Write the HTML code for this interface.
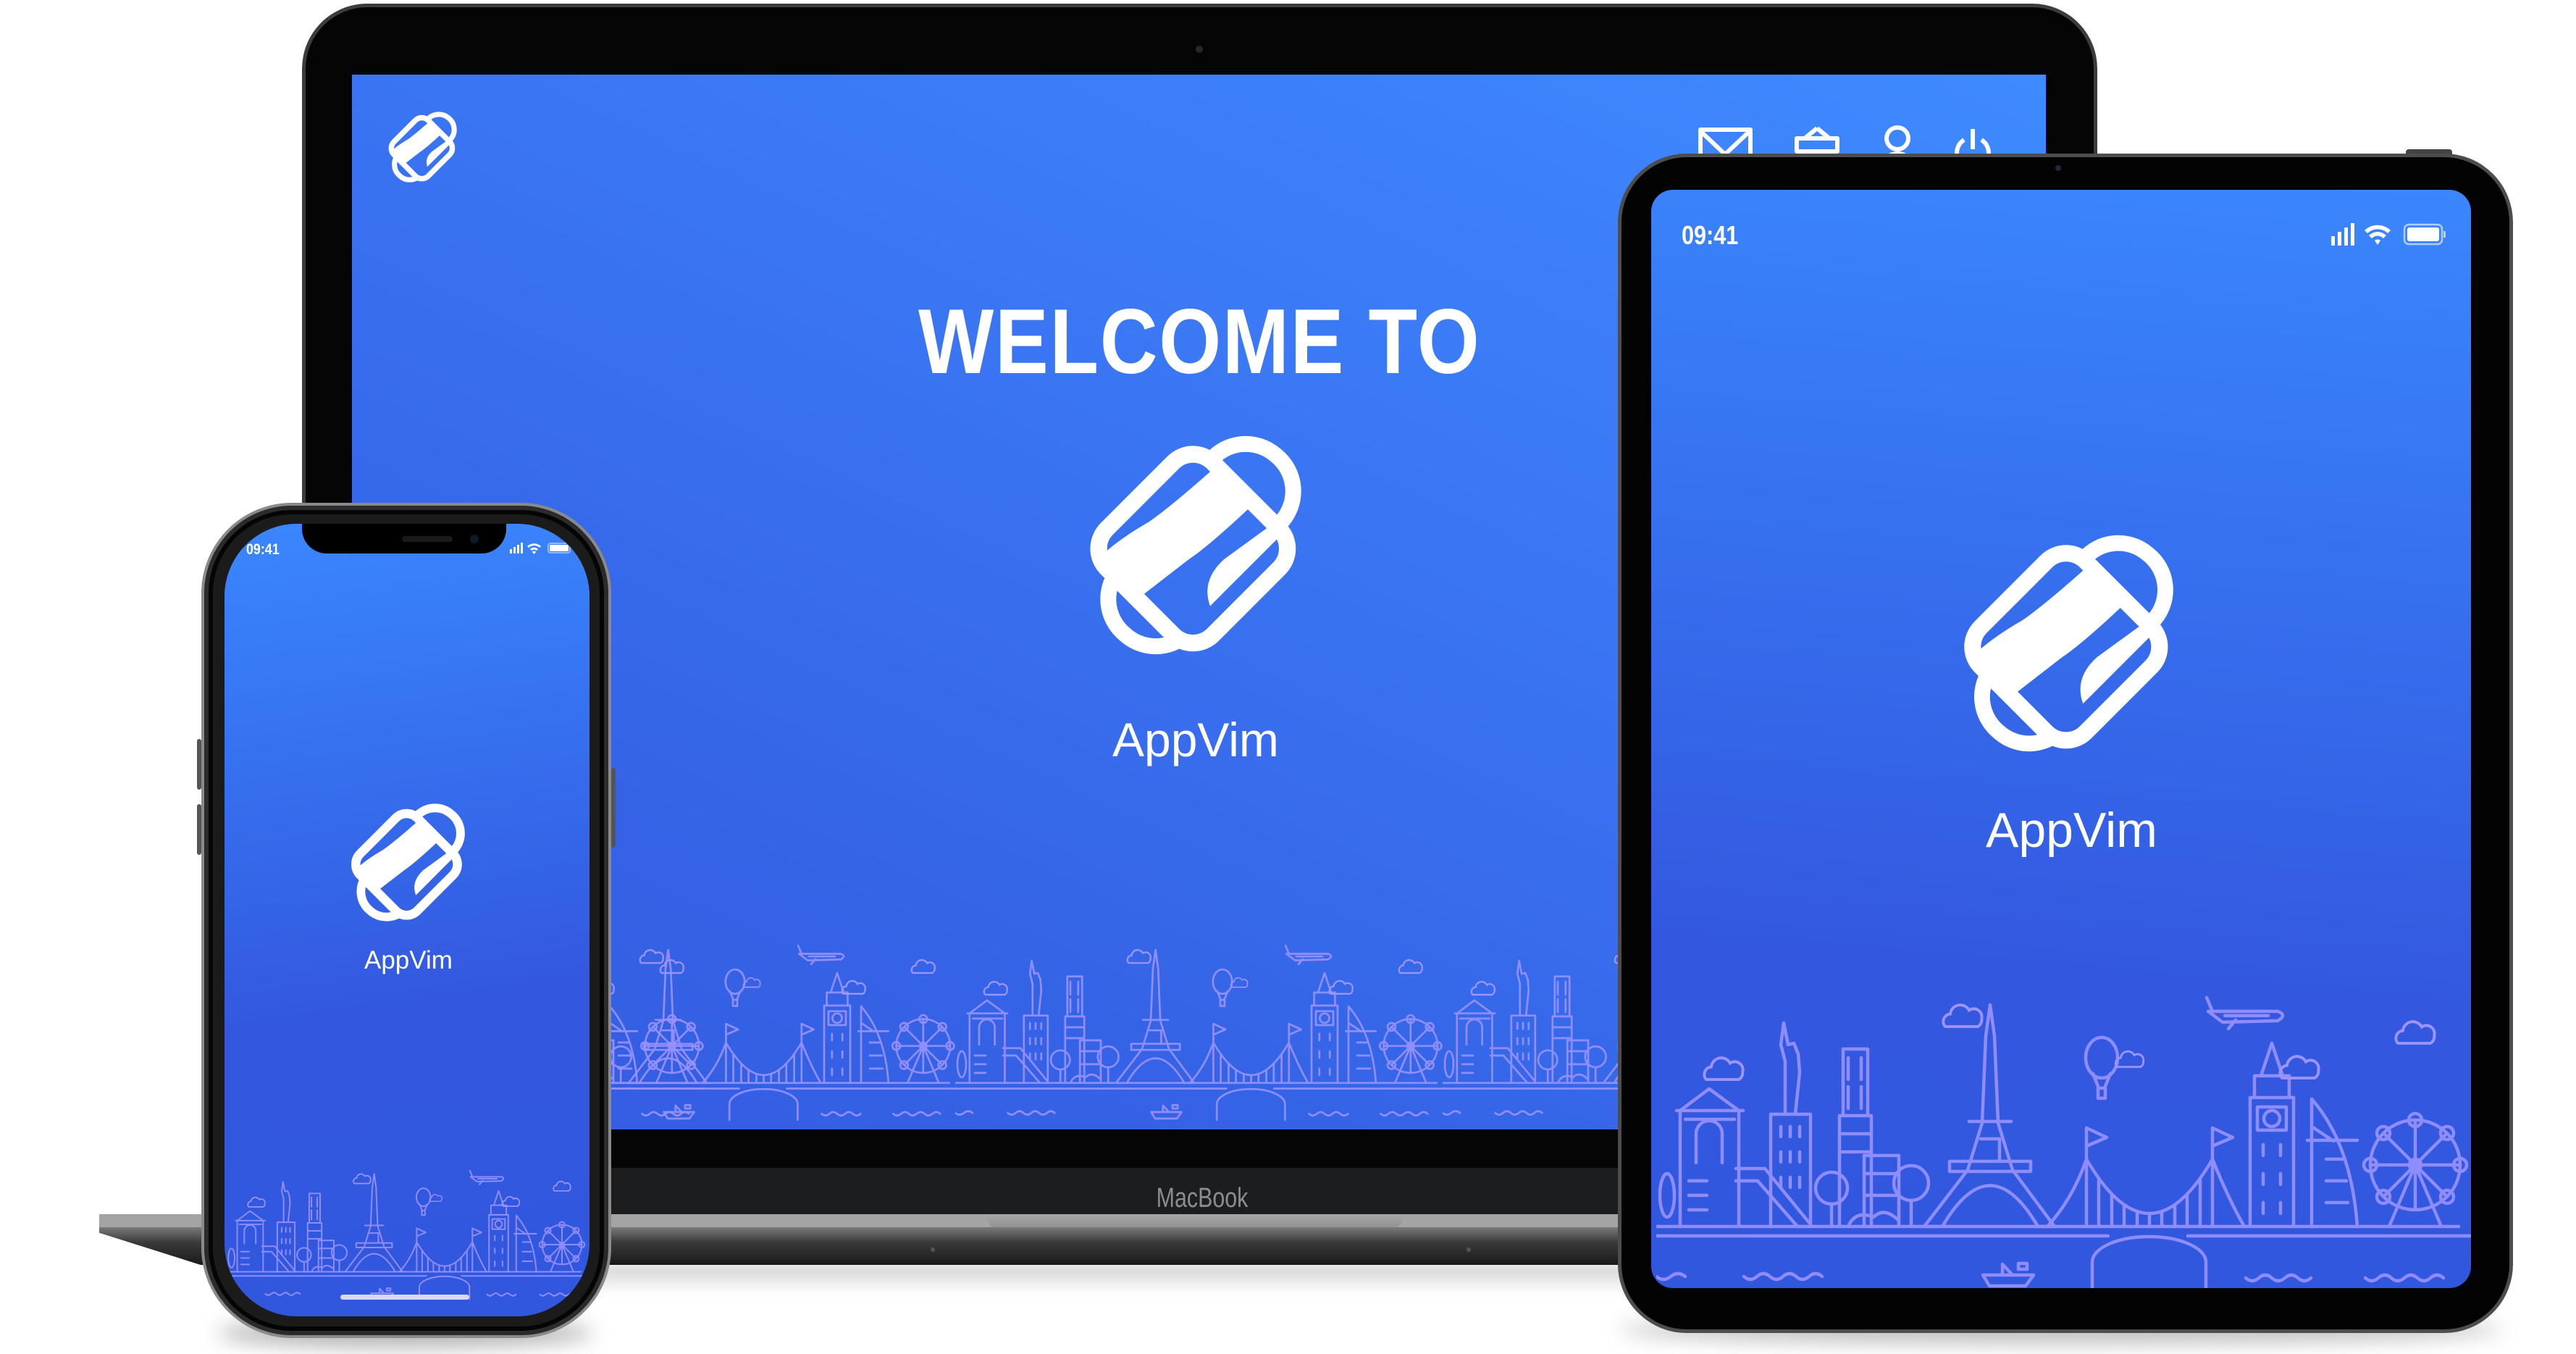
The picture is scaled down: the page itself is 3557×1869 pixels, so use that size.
<!DOCTYPE html>
<html><head><meta charset="utf-8">
<style>
*{margin:0;padding:0;box-sizing:border-box}
html,body{width:3557px;height:1869px;background:#fff;overflow:hidden;position:relative;font-family:"Liberation Sans",sans-serif}
.abs{position:absolute}
.txt{color:#fff;white-space:nowrap}
</style></head><body>
<svg width="0" height="0" style="position:absolute">
<defs>
<mask id="lm" maskUnits="userSpaceOnUse" x="-200" y="-200" width="1400" height="1400">
<rect x="-200" y="-200" width="1400" height="1400" fill="#fff"/>
<rect x="167" y="195" width="640" height="640" rx="120" transform="rotate(45 487 515)" fill="#000"/>
</mask>
<symbol id="logo" viewBox="-15 5 1005 990">
<g mask="url(#lm)"><rect x="320" y="0" width="400" height="1000" rx="195" transform="rotate(40 520 500)" fill="none" stroke="#fff" stroke-width="68"/></g>
<rect x="167" y="195" width="640" height="640" rx="120" transform="rotate(45 487 515)" fill="none" stroke="#fff" stroke-width="72"/>
<path d="M80 560 Q160 640 250 730 L470 560 Q560 500 750 320 Q670 240 590 160 Q400 330 300 400 Q160 480 80 560Z" fill="#fff"/>
<path d="M560 760 Q520 650 620 560 L840 400 L880 440 L620 700 Z" fill="#fff"/>
</symbol>
<symbol id="cloud" viewBox="-40 -40 80 60">
<path d="M-30 12 A12 12 0 0 1 -22 -8 A16 16 0 0 1 8 -14 A13 13 0 0 1 28 0 A12 12 0 0 1 22 12 Z" fill="none" stroke="#9c94ff" stroke-width="4.5"/>
</symbol>
<symbol id="sky" viewBox="0 0 1125 430">
<g fill="none" stroke="#9a92ff" stroke-width="4.5" stroke-linejoin="round" stroke-linecap="round" opacity="0.9">
<path d="M0 343H1108M0 356H624M734 356H1125"/>
<path d="M602 432V392A78.5 35 0 0 1 759 392V432"/>
<path d="M0 412q10 8 20 0t20 0M121 412q9 8 18 0t18 0t18 0t18 0t18 0t18 0M814 414q9 8 18 0t18 0t18 0t18 0t18 0M979 414q9 8 18 0t18 0t18 0t18 0t18 0t18 0"/>
<path d="M451 410H521L510 425H460ZM478 410V395L492 410M500 402h12v-8h-12z"/>
<path d="M370 343L430 265L450 200L455 80L461 37L467 80L472 200L492 265L550 343M405 253H517V267H405ZM432 198H490M395 343Q461 230 527 343M448 222h26v31M366 343h30M526 343h28"/>
<path d="M594 343V247M768 343V247M594 247V207L622 220L594 232M768 247V207L796 220L768 232M594 250Q681 400 768 250M594 250Q575 305 540 343M768 250Q790 305 812 343M611 277V343M629 298V343M646 313V343M664 322V343M681 325V343M698 322V343M716 313V343M733 298V343M751 277V343"/>
<path d="M820 343V165H880V343M826 165V135H874V165M835 135L850 90L865 135M830 178h40v32h-40zM838 230v15M862 230v15M838 270v15M862 270v15M838 310v15M862 310v15"/>
<circle cx="850" cy="194" r="11"/>
<path d="M905 343V167Q960 230 968 343M905 205L935 225M899 224H968M925 250h25M925 280h28M925 310h30"/>
<circle cx="1048" cy="258" r="62"/><circle cx="1048" cy="258" r="8"/>
<path d="M986 258H1110M1048 196V320M1004 214L1092 302M1092 214L1004 302M1048 258L1012 343M1048 258L1084 343"/>
<g><circle cx="1048" cy="196" r="9"/><circle cx="1110" cy="258" r="9"/><circle cx="986" cy="258" r="9"/><circle cx="1092" cy="214" r="9"/><circle cx="1004" cy="214" r="9"/><circle cx="1092" cy="302" r="9"/><circle cx="1004" cy="302" r="9"/></g>
<ellipse cx="615" cy="110" rx="22" ry="28"/><path d="M603 132L611 152M627 132L619 152M610 152h10v14h-10z"/>
<path d="M762 46H858Q872 51 858 59L782 61ZM768 46L760 27M800 58L790 70M785 52h60"/>
<path d="M178 188V115L172 92L176 62L182 92L190 90L196 105L198 130L192 188M158 343V188H213V343M172 205v14M185 205v14M198 205v14M172 240v14M185 240v14M198 240v14M172 275v14M185 275v14M198 275v14"/>
<path d="M258 190V98H292V190M253 343V190H297V343M265 110v30M283 110v30M265 150v30M283 150v30M253 215H297M253 240H297M287 343V245H335V343M287 270H335M287 300H335"/>
<path d="M33 343V183L73 153L114 183V343M28 183H120M40 195H108M55 255V215A18 18 0 0 1 91 215V255M45 280H70M45 300H70M45 320H70M110 263H150L213 340M110 280H140L195 343"/>
<circle cx="242" cy="290" r="22"/><path d="M242 312V343M352 307V343M265 343Q275 320 300 330Q315 315 335 335"/><circle cx="352" cy="283" r="24"/>
<ellipse cx="15" cy="300" rx="10" ry="30"/>
</g>
<use href="#cloud" x="60" y="95" width="70" height="52"/>
<use href="#cloud" x="1015" y="45" width="70" height="52"/>
<use href="#cloud" x="855" y="93" width="70" height="52"/>
<use href="#cloud" x="390" y="22" width="70" height="52"/>
<use href="#cloud" x="630" y="90" width="50" height="38"/>
</symbol>
</defs>
</svg>

<!-- LAPTOP -->
<div class="abs" style="left:417px;top:5px;width:2479px;height:1612px;background:#050505;border:5px solid #3c3c3c;border-bottom:none;border-radius:90px 90px 0 0"></div>
<div class="abs" style="left:1651px;top:63px;width:10px;height:10px;border-radius:50%;background:#1e2a36"></div>
<div class="abs" style="left:486px;top:103px;width:2339px;height:1456px;background:linear-gradient(205deg,#3f8aff 0%,#3a76f3 40%,#3563e6 75%,#345ce2 100%);overflow:hidden">
  <svg class="abs" style="left:44px;top:45px" width="105" height="110"><use href="#logo" width="105" height="110"/></svg>
  <div class="abs txt" style="left:782px;top:305px;font-size:127px;font-weight:bold;line-height:1;transform:scaleX(0.87);transform-origin:0 0;letter-spacing:2px">WELCOME TO</div>
  <svg class="abs" style="left:999px;top:487px" width="325" height="325"><use href="#logo" width="325" height="325"/></svg>
  <div class="abs txt" style="left:1050px;top:885px;font-size:66px;line-height:1">AppVim</div>
  <svg class="abs" style="left:0;top:0" width="2339" height="1456" fill="none" stroke="#fff" stroke-width="6" stroke-linejoin="round">
    <path d="M1862 76h69v50h-69zM1862 78l34 32l34-32"/>
    <path d="M1995 88h56v18h-56zM2023 74l-17 14M2023 74l17 14M2001 106l6 30h33l6-30"/>
    <circle cx="2134" cy="88" r="15"/><path d="M2112 120q22-22 44 0"/>
    <path d="M2238 75v28M2226 90a22 22 0 1 0 24 0"/>
  </svg>
  <svg class="abs" style="left:0;top:1186px" width="2339" height="270" viewBox="0 0 2339 270">
    <use href="#sky" x="-187" y="0" width="675" height="258"/>
    <use href="#sky" x="160" y="0" width="675" height="258"/>
    <use href="#sky" x="833" y="0" width="675" height="258"/>
    <use href="#sky" x="1506" y="0" width="675" height="258"/>
  </svg>
</div>
<div class="abs" style="left:422px;top:1612px;width:2469px;height:64px;background:#1c1d1f"></div>
<div class="abs" style="left:1660px;top:1635px;font-size:38px;color:#8d8d8f;line-height:1;transform:translateX(-50%) scaleX(0.8)">MacBook</div>
<!-- base -->
<div class="abs" style="left:137px;top:1676px;width:3100px;height:18px;background:#a4a4a4"></div>
<div class="abs" style="left:1362px;top:1676px;width:576px;height:24px;background:linear-gradient(#a8a8a8,#8a8a8a);border-radius:0 0 30px 30px"></div>
<div class="abs" style="left:137px;top:1694px;width:3100px;height:52px;background:linear-gradient(#7a7a7a,#3a3a3a 40%,#1a1a1a);clip-path:polygon(0 0,100% 0,100% 100%,140px 100%,0 15%)"></div>
<div class="abs" style="left:1285px;top:1722px;width:6px;height:6px;border-radius:50%;background:#555"></div>
<div class="abs" style="left:2025px;top:1722px;width:6px;height:6px;border-radius:50%;background:#555"></div>
<div class="abs" style="left:300px;top:1746px;width:2900px;height:40px;background:linear-gradient(rgba(0,0,0,0.18),rgba(0,0,0,0));filter:blur(6px)"></div>

<!-- TABLET -->
<div class="abs" style="left:2236px;top:1815px;width:1220px;height:40px;border-radius:50%;background:rgba(0,0,0,0.25);filter:blur(14px)"></div>
<div class="abs" style="left:3322px;top:206px;width:64px;height:8px;background:#444;border-radius:4px 4px 0 0"></div>
<div class="abs" style="left:2234px;top:212px;width:1236px;height:1628px;background:#030303;border:5px solid #4d4d4d;border-radius:95px"></div>
<div class="abs" style="left:2838px;top:228px;width:8px;height:8px;border-radius:50%;background:#1e2a36"></div>
<div class="abs" style="left:2280px;top:262px;width:1132px;height:1516px;border-radius:30px;background:linear-gradient(185deg,#3a86fd 0%,#3670ef 35%,#3358df 70%,#3257df 100%);overflow:hidden">
  <div class="abs txt" style="left:42px;top:45px;font-size:36px;font-weight:bold;line-height:1;transform:scaleX(0.85);transform-origin:0 0">09:41</div>
  <svg class="abs" style="left:930px;top:44px" width="170" height="36" fill="#fff">
    <rect x="9" y="20" width="5" height="13"/><rect x="18" y="14" width="5" height="19"/><rect x="27" y="8" width="5" height="25"/><rect x="36" y="2" width="5" height="31"/>
    <path d="M55 12a26 26 0 0 1 36 0l-4 4a20 20 0 0 0-28 0zM61 19a17 17 0 0 1 24 0l-4 4a11 11 0 0 0-16 0zM69 26a6 6 0 0 1 8 0l-4 6z"/>
    <rect x="110" y="4" width="52" height="27" rx="6" fill="none" stroke="#fff" stroke-opacity="0.6" stroke-width="2.5"/><rect x="114" y="8" width="44" height="19" rx="3"/><rect x="164" y="13" width="3" height="9" fill-opacity="0.6"/>
  </svg>
  <svg class="abs" style="left:412px;top:456px" width="322" height="340"><use href="#logo" width="322" height="340"/></svg>
  <div class="abs txt" style="left:462px;top:850px;font-size:68px;line-height:1">AppVim</div>
  <svg class="abs" style="left:7px;top:1088px" width="1125" height="430"><use href="#sky" width="1125" height="430"/></svg>
</div>

<!-- PHONE -->
<div class="abs" style="left:300px;top:1820px;width:520px;height:40px;border-radius:50%;background:rgba(0,0,0,0.3);filter:blur(14px)"></div>
<div class="abs" style="left:278px;top:694px;width:566px;height:1153px;border-radius:125px;background:#1b1b1b;border:4px solid #8a8a8a;box-shadow:inset 0 0 0 6px #2b2b2b,inset 0 0 0 12px #050505"></div>
<div class="abs" style="left:272px;top:1020px;width:6px;height:70px;background:#555;border-radius:3px"></div>
<div class="abs" style="left:272px;top:1110px;width:6px;height:70px;background:#555;border-radius:3px"></div>
<div class="abs" style="left:844px;top:1060px;width:6px;height:110px;background:#555;border-radius:3px"></div>
<div class="abs" style="left:310px;top:723px;width:504px;height:1094px;border-radius:100px;background:linear-gradient(172deg,#3a87fe 0%,#3670ef 30%,#3358df 60%,#3257df 100%);overflow:hidden">
  <div class="abs" style="left:107px;top:-5px;width:282px;height:46px;background:#000;border-radius:0 0 34px 34px"></div>
  <div class="abs" style="left:245px;top:17px;width:70px;height:8px;background:#1a1a1a;border-radius:4px"></div>
  <div class="abs" style="left:339px;top:15px;width:12px;height:12px;border-radius:50%;background:#0d1a2a"></div>
  <div class="abs txt" style="left:30px;top:25px;font-size:21px;font-weight:bold;line-height:1;transform:scaleX(0.85);transform-origin:0 0">09:41</div>
  <svg class="abs" style="left:392px;top:25px" width="90" height="18" fill="#fff">
    <rect x="2" y="10" width="3" height="6"/><rect x="7" y="7" width="3" height="9"/><rect x="12" y="4" width="3" height="12"/><rect x="17" y="1" width="3" height="15"/>
    <path d="M26 6a14 14 0 0 1 19 0l-2 2a11 11 0 0 0-15 0zM30 10a8 8 0 0 1 11 0l-2 2a5 5 0 0 0-7 0zM33 14a3 3 0 0 1 5 0l-2.5 3z"/>
    <rect x="55" y="2" width="30" height="13" rx="3" fill="none" stroke="#fff" stroke-opacity="0.6" stroke-width="1.5"/><rect x="57" y="4" width="26" height="9" rx="1.5"/>
  </svg>
  <svg class="abs" style="left:164px;top:380px" width="175" height="175"><use href="#logo" width="175" height="175"/></svg>
  <div class="abs txt" style="left:193px;top:585px;font-size:35px;line-height:1">AppVim</div>
  <svg class="abs" style="left:3px;top:881px" width="497" height="190"><use href="#sky" width="497" height="190"/></svg>
  <div class="abs" style="left:160px;top:1064px;width:178px;height:7px;border-radius:4px;background:#d8d8f0"></div>
</div>
</body></html>
